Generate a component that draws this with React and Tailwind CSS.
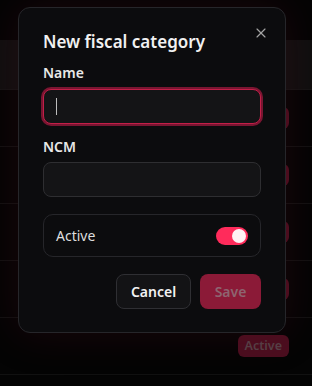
import React from 'react';
import { X } from 'lucide-react';

const rows = [1, 2, 3, 4, 5];

function BackgroundTable() {
    return (
        <div className="min-h-[386px] bg-[#070707]">
            <div className="h-10" />
            <div className="h-[50px] bg-[#1a1919] border-b border-[#222]" />
            {rows.map(r => (
                <div key={r} className="h-[57px] border-b border-[#1d1d1d] flex items-center justify-end pr-[23px]">
                    <span className="px-[7px] h-[22px] flex items-center rounded-md bg-[#7d1834] text-[#8f6f78] text-[12.5px] font-semibold">Active</span>
                </div>
            ))}
        </div>
    );
}

function Toggle({ on }) {
    return (
        <div className={"w-8 h-[18px] rounded-full flex items-center px-[2px] " + (on ? "bg-[#ff2b5b] justify-end" : "bg-[#333] justify-start")}>
            <div className="w-[14px] h-[14px] rounded-full bg-[#fff1f4]" />
        </div>
    );
}

export default function App() {
    return (
        <div className="relative" style={{ fontFamily: '"Noto Sans", "Open Sans", sans-serif' }}>
            <BackgroundTable />
            <div className="absolute inset-0 bg-black/40 pt-[7px] pl-[18px]">
                <div className="relative w-[268px] h-[326px] bg-[#0c0c0e] border border-[#26262a] rounded-xl px-6 pt-5 shadow-[0_0_40px_rgba(90,10,30,0.25)]">
                    <button className="absolute top-[17px] right-[16px] text-[#a3a3a3]">
                        <X size={16} strokeWidth={1.75} />
                    </button>
                    <h2 className="text-[17px] leading-7 font-semibold text-[#f1f1f1]">New fiscal category</h2>
                    <div className="mt-[7px]">
                        <label className="block text-sm leading-5 font-semibold text-[#e8e8e8] mb-[6px]">Name</label>
                        <div className="h-[35px] rounded-lg bg-[#141416] border border-[#c21f48] ring-2 ring-[#7a1531] flex items-center px-3">
                            <span className="w-px h-[17px] bg-[#bdbdbd]" />
                        </div>
                    </div>
                    <div className="mt-[13px]">
                        <label className="block text-sm leading-5 font-semibold text-[#e8e8e8] mb-[5px]">NCM</label>
                        <div className="h-[35px] rounded-lg bg-[#141416] border border-[#2e2e31]" />
                    </div>
                    <div className="mt-[17px] h-[43px] rounded-[10px] border border-[#26262a] flex items-center justify-between pl-3 pr-3">
                        <span className="text-sm text-[#dedede]">Active</span>
                        <Toggle on />
                    </div>
                    <div className="mt-[17px] flex justify-end gap-[9px]">
                        <button className="h-[35px] w-[75px] rounded-lg bg-[#131315] border border-[#2f2f33] text-sm font-semibold text-[#f2f2f2]">Cancel</button>
                        <button className="h-[35px] w-[61px] rounded-lg bg-[#8b1a37] text-sm font-semibold text-[#8e6470]">Save</button>
                    </div>
                </div>
            </div>
        </div>
    );
}
